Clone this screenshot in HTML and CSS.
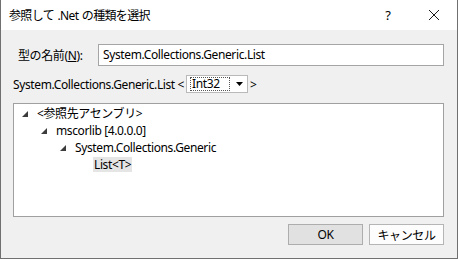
FILE: index.html
```html
<!DOCTYPE html>
<html lang="ja">
<head>
    <meta charset="UTF-8">
    <title>参照して .Net の種類を選択</title>
    <link rel="stylesheet" href="styles.css">
</head>
<body>
    <div class="window">
        <div class="titlebar">
            <span class="title">参照して .Net の種類を選択</span>
            <div class="title-buttons">
                <span class="help">?</span>
                <span class="close">
                    <svg width="12" height="12" viewBox="0 0 12 12">
                        <path d="M1 1 L11 11 M11 1 L1 11" stroke="#1a1a1a" stroke-width="1" fill="none"/>
                    </svg>
                </span>
            </div>
        </div>

        <div class="content">
            <div class="name-row">
                <label class="name-label" for="typeName">型の名前(<u>N</u>):</label>
                <div class="textbox" id="typeName">System.Collections.Generic.List</div>
            </div>

            <div class="generic-row">
                <span>System.Collections.Generic.List &lt;</span>
                <div class="combo">
                    <span class="combo-value">Int32</span>
                    <svg class="combo-arrow" width="7" height="4" viewBox="0 0 7 4">
                        <polygon points="0,0 7,0 3.5,4" fill="#000"/>
                    </svg>
                </div>
                <span>&gt;</span>
            </div>

            <div class="tree">
                <div class="tree-item level-0">
                    <svg class="expander" width="6" height="6" viewBox="0 0 6 6"><polygon points="6,0 6,6 0,6" fill="#3c3c3c"/></svg>
                    <span class="node">&lt;参照先アセンブリ&gt;</span>
                </div>
                <div class="tree-item level-1">
                    <svg class="expander" width="6" height="6" viewBox="0 0 6 6"><polygon points="6,0 6,6 0,6" fill="#3c3c3c"/></svg>
                    <span class="node">mscorlib [4.0.0.0]</span>
                </div>
                <div class="tree-item level-2">
                    <svg class="expander" width="6" height="6" viewBox="0 0 6 6"><polygon points="6,0 6,6 0,6" fill="#3c3c3c"/></svg>
                    <span class="node">System.Collections.Generic</span>
                </div>
                <div class="tree-item level-3">
                    <span class="expander-space"></span>
                    <span class="node selected">List&lt;T&gt;</span>
                </div>
            </div>

            <div class="buttons">
                <button class="btn default">OK</button>
                <button class="btn">キャンセル</button>
            </div>
        </div>
    </div>
</body>
</html>
```

FILE: styles.css
```css
* {
    margin: 0;
    padding: 0;
    box-sizing: border-box;
}

body {
    font-family: 'Noto Sans', 'Noto Sans CJK JP', sans-serif;
    font-size: 12px;
    letter-spacing: -0.38px;
    color: #000;
    background: #f0f0f0;
}

.window {
    width: 458px;
    height: 259px;
    display: flex;
    flex-direction: column;
    background: #f0f0f0;
    border: 1px solid #707070;
    border-top: none;
}

.titlebar {
    height: 30px;
    background: #fff;
    display: flex;
    align-items: center;
    justify-content: space-between;
    padding-left: 8px;
}

.title {
    font-size: 12px;
    letter-spacing: -0.65px;
    word-spacing: 1px;
    color: #000;
}

.title-buttons {
    display: flex;
    align-items: center;
    height: 100%;
}

.help {
    width: 46px;
    text-align: center;
    font-size: 13px;
}

.close {
    width: 46px;
    height: 100%;
    display: flex;
    align-items: center;
    justify-content: center;
}

.content {
    flex: 1;
    display: flex;
    flex-direction: column;
    padding: 14px 13px 0 12px;
}

.name-row {
    display: flex;
    align-items: center;
    height: 22px;
}

.name-label {
    width: 85px;
    padding-left: 5px;
}

.textbox {
    flex: 1;
    height: 22px;
    background: #fff;
    border: 1px solid #a5a5a5;
    padding: 0 4px;
    line-height: 20px;
}

.generic-row {
    display: flex;
    align-items: center;
    gap: 2px;
    margin-top: 9px;
    height: 18px;
}

.combo {
    width: 62px;
    height: 18px;
    background: #fff;
    border: 1px solid #b9b9b9;
    display: flex;
    align-items: center;
    justify-content: space-between;
    padding: 0 4px 0 3px;
}

.combo-value {
    border: 1px dotted #555;
    line-height: 12px;
    padding: 0 9px 0 1px;
}

.tree {
    margin-top: 10px;
    height: 114px;
    background: #fff;
    border: 1px solid #a0a0a0;
    padding-top: 1px;
}

.tree-item {
    display: flex;
    align-items: center;
    height: 17px;
}

.tree-item.level-0 { padding-left: 8px; }
.tree-item.level-1 { padding-left: 27px; }
.tree-item.level-2 { padding-left: 46px; }
.tree-item.level-3 { padding-left: 65px; }

.expander,
.expander-space {
    width: 6px;
    height: 6px;
    margin-right: 8px;
    flex-shrink: 0;
}

.node {
    padding: 0 1px;
    line-height: 15px;
}

.node.selected {
    background: #e5e5e5;
}

.buttons {
    display: flex;
    justify-content: flex-end;
    gap: 6px;
    margin-top: 7px;
}

.btn {
    width: 75px;
    height: 21px;
    font-family: inherit;
    font-size: 12px;
    letter-spacing: inherit;
    background: #fdfdfd;
    border: 1px solid #b5b5b5;
    color: #000;
}

.btn.default {
    background: #e1e1e1;
    border-color: #adadad;
}
```
